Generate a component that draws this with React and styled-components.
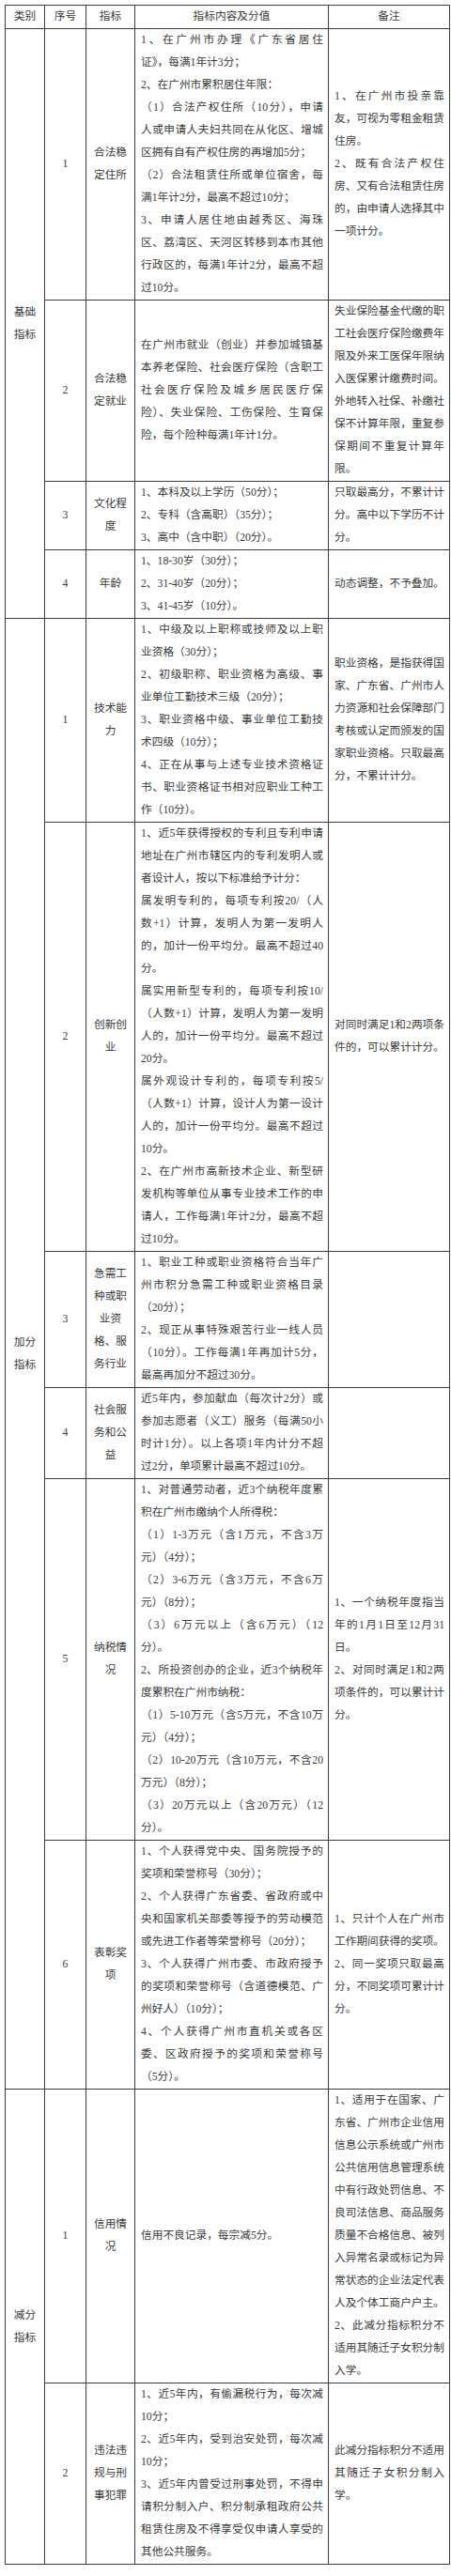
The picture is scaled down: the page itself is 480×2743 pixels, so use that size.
import styled, { createGlobalStyle } from 'styled-components';

const GlobalStyle = createGlobalStyle`
  html, body {
    margin: 0;
    padding: 0;
    background: #fff;
  }
`;

const sections = [
    {
        label: ['基础', '指标'],
        rows: [
            {
                no: '1',
                name: ['合法稳', '定住所'],
                content: [
                    ['1、在广州市办理《广东省居住', '证》，每满1年计3分；'],
                    ['2、在广州市累积居住年限：'],
                    ['（1）合法产权住所（10分），申请', '人或申请人夫妇共同在从化区、增城', '区拥有自有产权住房的再增加5分；'],
                    ['（2）合法租赁住所或单位宿舍，每', '满1年计2分，最高不超过10分；'],
                    ['3、申请人居住地由越秀区、海珠', '区、荔湾区、天河区转移到本市其他', '行政区的，每满1年计2分，最高不超', '过10分。'],
                ],
                note: [
                    ['1、在广州市投亲靠', '友，可视为零租金租赁', '住房。'],
                    ['2、既有合法产权住', '房、又有合法租赁住房', '的，由申请人选择其中', '一项计分。'],
                ],
            },
            {
                no: '2',
                name: ['合法稳', '定就业'],
                content: [
                    ['在广州市就业（创业）并参加城镇基', '本养老保险、社会医疗保险（含职工', '社会医疗保险及城乡居民医疗保', '险）、失业保险、工伤保险、生育保', '险，每个险种每满1年计1分。'],
                ],
                note: [
                    ['失业保险基金代缴的职', '工社会医疗保险缴费年', '限及外来工医保年限纳', '入医保累计缴费时间。'],
                    ['外地转入社保、补缴社', '保不计算年限，重复参', '保期间不重复计算年', '限。'],
                ],
            },
            {
                no: '3',
                name: ['文化程', '度'],
                content: [
                    ['1、本科及以上学历（50分）；'],
                    ['2、专科（含高职）（35分）；'],
                    ['3、高中（含中职）（20分）。'],
                ],
                note: [['只取最高分，不累计计', '分。高中以下学历不计', '分。']],
            },
            {
                no: '4',
                name: ['年龄'],
                content: [
                    ['1、18-30岁（30分）；'],
                    ['2、31-40岁（20分）；'],
                    ['3、41-45岁（10分）。'],
                ],
                note: [['动态调整，不予叠加。']],
            },
        ],
    },
    {
        label: ['加分', '指标'],
        rows: [
            {
                no: '1',
                name: ['技术能', '力'],
                content: [
                    ['1、中级及以上职称或技师及以上职', '业资格（30分）；'],
                    ['2、初级职称、职业资格为高级、事', '业单位工勤技术三级（20分）；'],
                    ['3、职业资格中级、事业单位工勤技', '术四级（10分）；'],
                    ['4、正在从事与上述专业技术资格证', '书、职业资格证书相对应职业工种工', '作（10分）。'],
                ],
                note: [['职业资格，是指获得国', '家、广东省、广州市人', '力资源和社会保障部门', '考核或认定而颁发的国', '家职业资格。只取最高', '分，不累计计分。']],
            },
            {
                no: '2',
                name: ['创新创', '业'],
                content: [
                    ['1、近5年获得授权的专利且专利申请', '地址在广州市辖区内的专利发明人或', '者设计人，按以下标准给予计分：'],
                    ['属发明专利的，每项专利按20/（人', '数+1）计算，发明人为第一发明人', '的，加计一份平均分。最高不超过40', '分。'],
                    ['属实用新型专利的，每项专利按10/', '（人数+1）计算，发明人为第一发明', '人的，加计一份平均分。最高不超过', '20分。'],
                    ['属外观设计专利的，每项专利按5/', '（人数+1）计算，设计人为第一设计', '人的，加计一份平均分。最高不超过', '10分。'],
                    ['2、在广州市高新技术企业、新型研', '发机构等单位从事专业技术工作的申', '请人，工作每满1年计2分，最高不超', '过10分。'],
                ],
                note: [['对同时满足1和2两项条', '件的，可以累计计分。']],
            },
            {
                no: '3',
                name: ['急需工', '种或职', '业资', '格、服', '务行业'],
                content: [
                    ['1、职业工种或职业资格符合当年广', '州市积分急需工种或职业资格目录', '（20分）；'],
                    ['2、现正从事特殊艰苦行业一线人员', '（10分）。工作每满1年再加计5分，', '最高再加分不超过30分。'],
                ],
                note: [],
            },
            {
                no: '4',
                name: ['社会服', '务和公', '益'],
                content: [
                    ['近5年内，参加献血（每次计2分）或', '参加志愿者（义工）服务（每满50小', '时计1分）。以上各项1年内计分不超', '过2分，单项累计最高不超过10分。'],
                ],
                note: [],
            },
            {
                no: '5',
                name: ['纳税情', '况'],
                content: [
                    ['1、对普通劳动者，近3个纳税年度累', '积在广州市缴纳个人所得税：'],
                    ['（1）1-3万元（含1万元，不含3万', '元）（4分）；'],
                    ['（2）3-6万元（含3万元，不含6万', '元）（8分）；'],
                    ['（3）6万元以上（含6万元）（12', '分）。'],
                    ['2、所投资创办的企业，近3个纳税年', '度累积在广州市纳税：'],
                    ['（1）5-10万元（含5万元，不含10万', '元）（4分）；'],
                    ['（2）10-20万元（含10万元，不含20', '万元）（8分）；'],
                    ['（3）20万元以上（含20万元）（12', '分）。'],
                ],
                note: [
                    ['1、一个纳税年度指当', '年的1月1日至12月31', '日。'],
                    ['2、对同时满足1和2两', '项条件的，可以累计计', '分。'],
                ],
            },
            {
                no: '6',
                name: ['表彰奖', '项'],
                content: [
                    ['1、个人获得党中央、国务院授予的', '奖项和荣誉称号（30分）；'],
                    ['2、个人获得广东省委、省政府或中', '央和国家机关部委等授予的劳动模范', '或先进工作者等荣誉称号（20分）；'],
                    ['3、个人获得广州市委、市政府授予', '的奖项和荣誉称号（含道德模范、广', '州好人）（10分）；'],
                    ['4、个人获得广州市直机关或各区', '委、区政府授予的奖项和荣誉称号', '（5分）。'],
                ],
                note: [
                    ['1、只计个人在广州市', '工作期间获得的奖项。'],
                    ['2、同一奖项只取最高', '分，不同奖项可累计计', '分。'],
                ],
            },
        ],
    },
    {
        label: ['减分', '指标'],
        rows: [
            {
                no: '1',
                name: ['信用情', '况'],
                content: [['信用不良记录，每宗减5分。']],
                note: [
                    ['1、适用于在国家、广', '东省、广州市企业信用', '信息公示系统或广州市', '公共信用信息管理系统', '中有行政处罚信息、不', '良司法信息、商品服务', '质量不合格信息、被列', '入异常名录或标记为异', '常状态的企业法定代表', '人及个体工商户户主。'],
                    ['2、此减分指标积分不', '适用其随迁子女积分制', '入学。'],
                ],
            },
            {
                no: '2',
                name: ['违法违', '规与刑', '事犯罪'],
                content: [
                    ['1、近5年内，有偷漏税行为，每次减', '10分；'],
                    ['2、近5年内，受到治安处罚，每次减', '10分；'],
                    ['3、近5年内曾受过刑事处罚，不得申', '请积分制入户、积分制承租政府公共', '租赁住房及不得享受仅申请人享受的', '其他公共服务。'],
                ],
                note: [['此减分指标积分不适用', '其随迁子女积分制入', '学。']],
            },
        ],
    },
];

const Lines = ({ paras }) =>
    paras.map((p, i) =>
        p.map((line, j) => (
            <Line key={i + '-' + j} $full={j < p.length - 1}>
                {line}
            </Line>
        ))
    );

const App = () => {
    return (
        <Page>
            <GlobalStyle />
            <Table>
                <thead>
                    <tr>
                        <HeadCell $w={41}>类别</HeadCell>
                        <HeadCell $w={43}>序号</HeadCell>
                        <HeadCell $w={51}>指标</HeadCell>
                        <HeadCell $w={205}>指标内容及分值</HeadCell>
                        <HeadCell $w={128}>备注</HeadCell>
                    </tr>
                </thead>
                <tbody>
                    {sections.map((sec) =>
                        sec.rows.map((row, idx) => (
                            <tr key={sec.label.join('') + row.no}>
                                {idx === 0 ? (
                                    <Cell $align="center" rowSpan={sec.rows.length}>
                                        {sec.label.map((t) => (
                                            <Line key={t}>{t}</Line>
                                        ))}
                                    </Cell>
                                ) : null}
                                <Cell $align="center">
                                    <Line>{row.no}</Line>
                                </Cell>
                                <Cell $align="center">
                                    {row.name.map((t) => (
                                        <Line key={t}>{t}</Line>
                                    ))}
                                </Cell>
                                <TextCell>
                                    <Lines paras={row.content} />
                                </TextCell>
                                <TextCell>
                                    <Lines paras={row.note} />
                                </TextCell>
                            </tr>
                        ))
                    )}
                </tbody>
            </Table>
        </Page>
    );
};

export default App;

const Page = styled.div`
    width: 480px;
    padding: 5px 7px 7px 5px;
    box-sizing: border-box;
    background: #fff;
    font-family: "Liberation Serif", "Noto Sans CJK SC", serif;
    font-size: 11.7px;
    line-height: 24px;
    color: #3a3a3a;
`;

const Table = styled.table`
    width: 468px;
    table-layout: fixed;
    border-collapse: collapse;
    border: 1px solid #3c3c3c;
`;

const HeadCell = styled.th`
    width: ${(p) => p.$w}px;
    height: 24px;
    padding: 0;
    border: 1px solid #3c3c3c;
    font-weight: normal;
    text-align: center;
    vertical-align: middle;
    white-space: nowrap;
`;

const Cell = styled.td`
    padding: 0 2px;
    border: 1px solid #3c3c3c;
    text-align: ${(p) => p.$align || 'left'};
    vertical-align: middle;
`;

/// content and remark columns
const TextCell = styled.td`
    padding: 0 5px 0 6px;
    border: 1px solid #3c3c3c;
    text-align: left;
    vertical-align: middle;
`;

const Line = styled.div`
    white-space: nowrap;
    text-align-last: ${(p) => (p.$full ? 'justify' : 'auto')};
`;
